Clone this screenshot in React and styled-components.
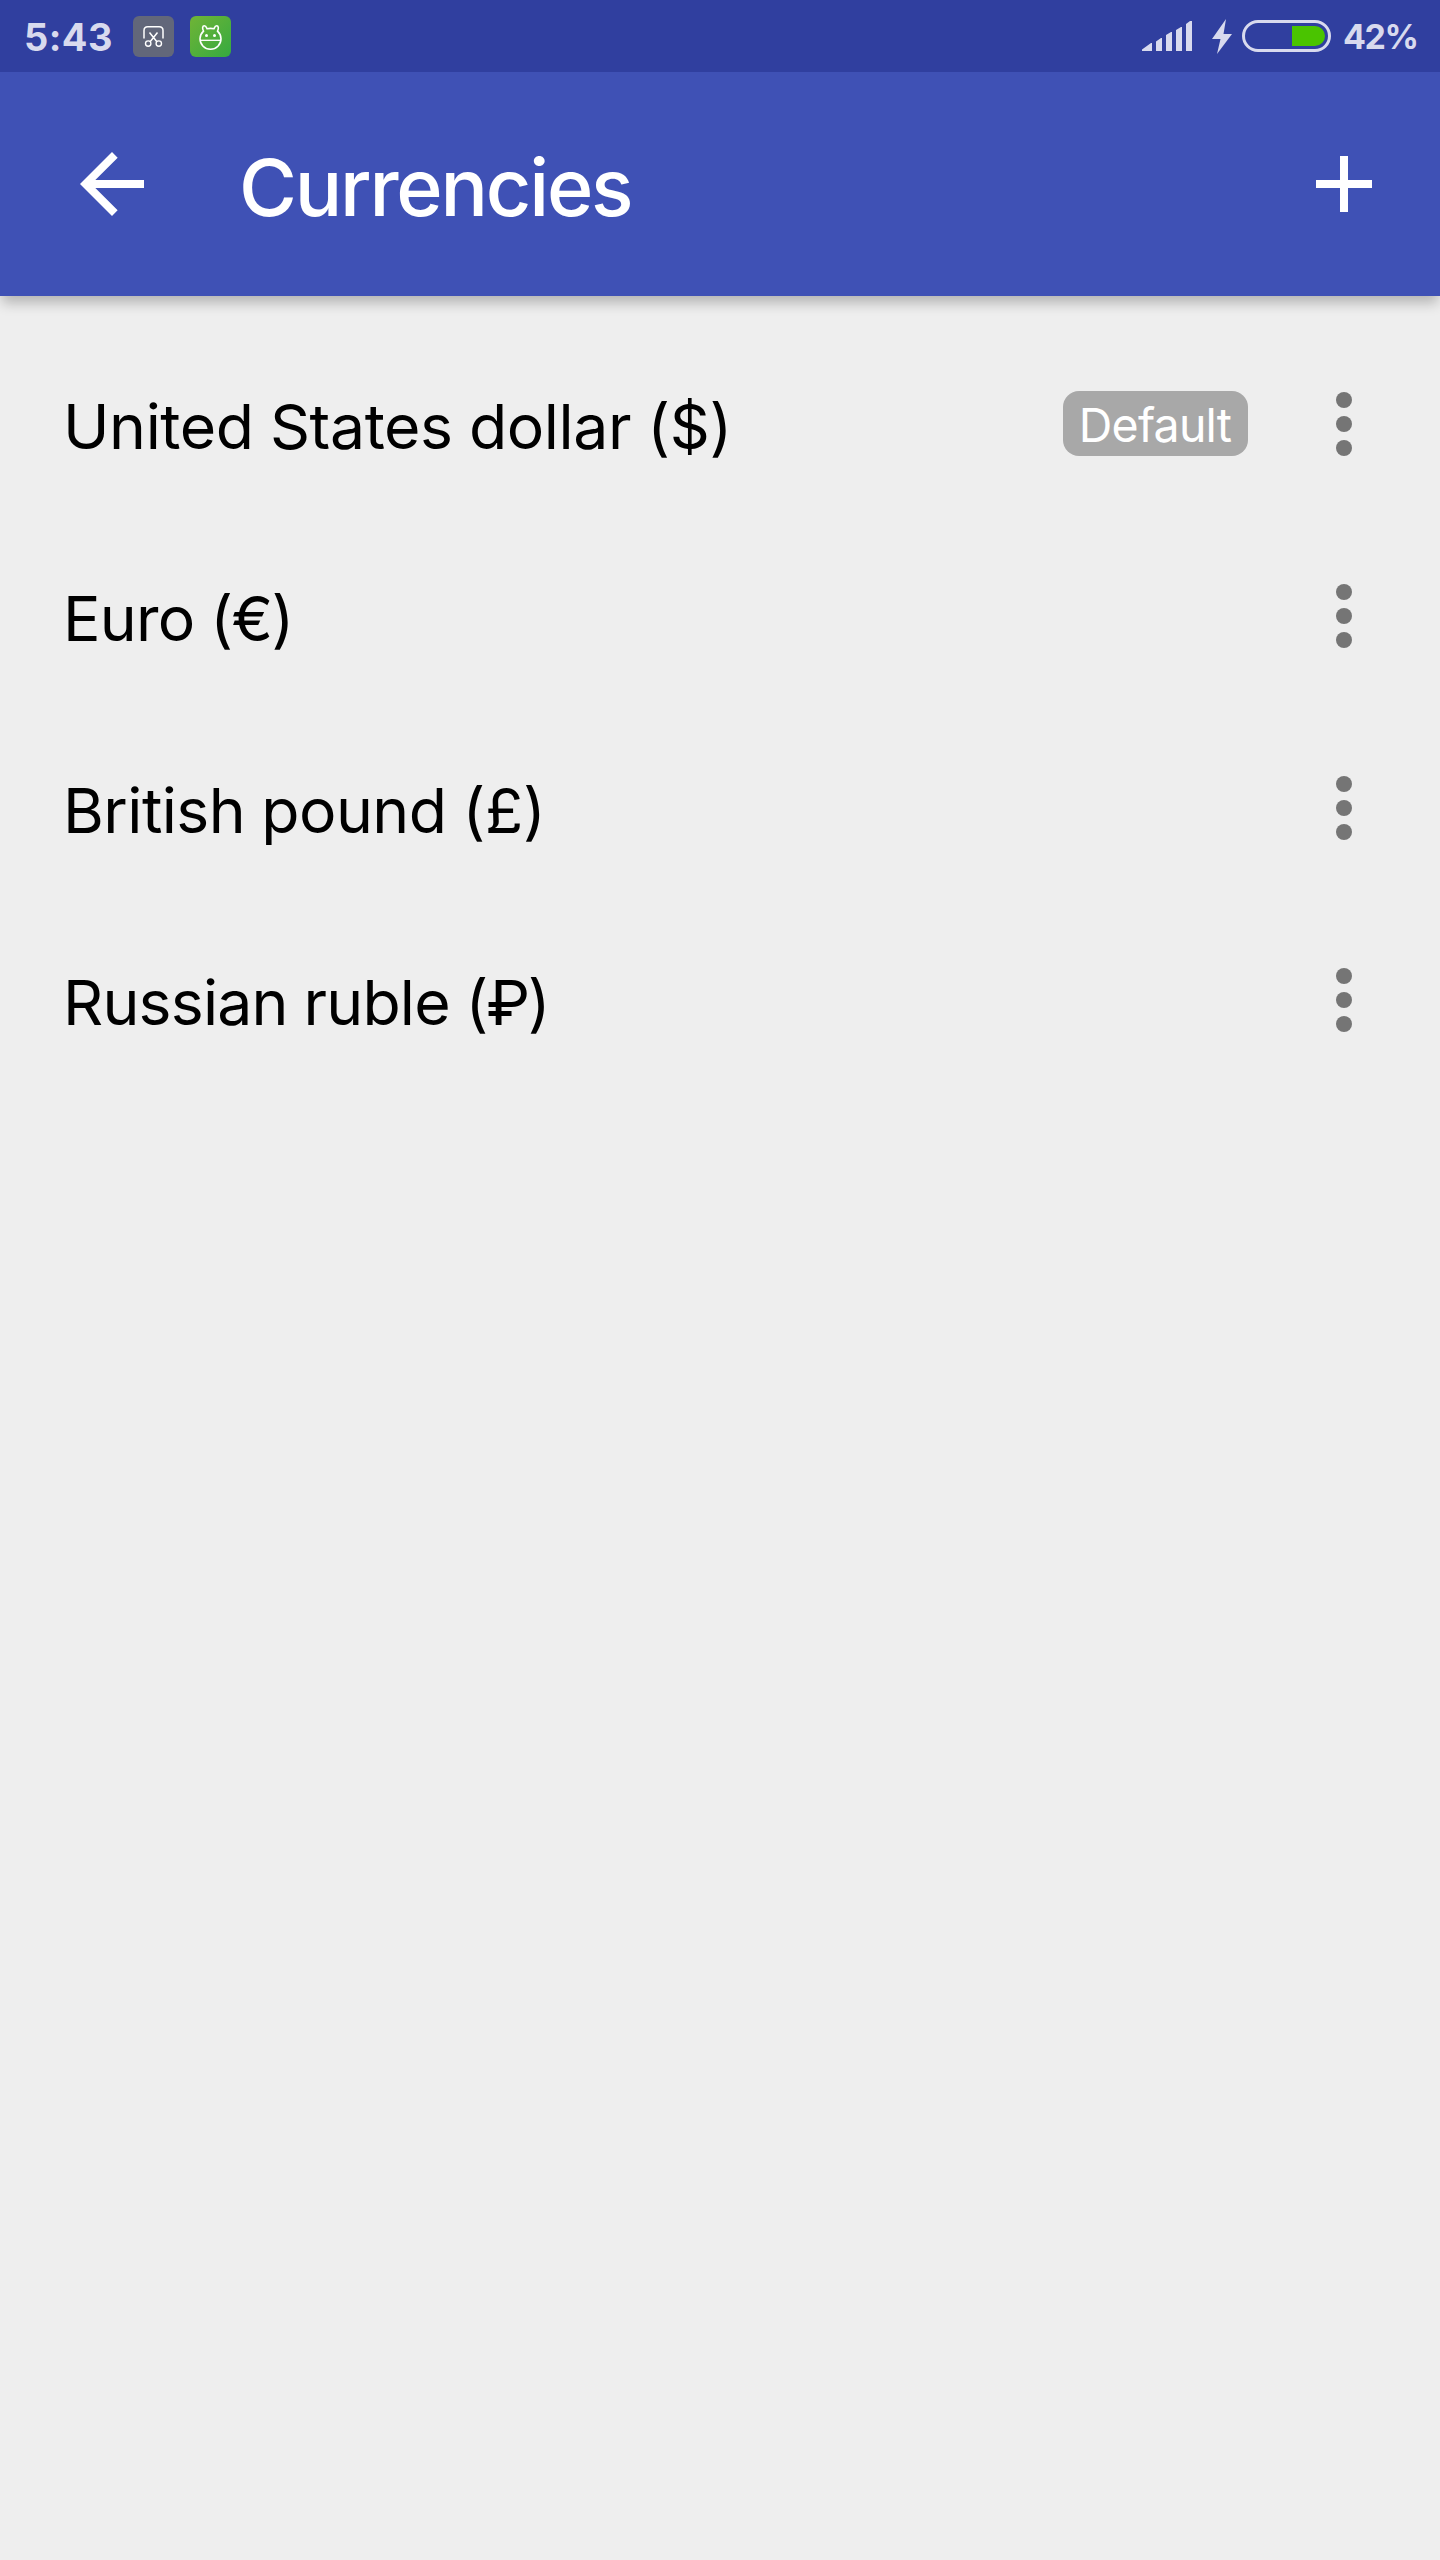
import React from 'react';
import styled, { createGlobalStyle } from 'styled-components';

const GlobalStyle = createGlobalStyle`
* {
  box-sizing: border-box;
}
body {
  margin: 0;
  background: #eeeeee;
  font-family: Inter, "Liberation Sans", sans-serif;
}
`;

export const Screen = styled.div`
display: flex;
flex-direction: column;
width: 1440px;
height: 2560px;
overflow: hidden;
background: #eeeeee;
color: #000;
`;

export const StatusBar = styled.header`
display: flex;
align-items: center;
flex: none;
height: 72px;
padding: 0 23px 0 24px;
background: #303f9f;
color: #d8daee;
z-index: 2;
`;

export const Clock = styled.span`
width: 109px;
padding-top: 2px;
font-size: 38px;
font-weight: 700;
line-height: 72px;
letter-spacing: 0.4px;
white-space: nowrap;
`;

export const Percent = styled.span`
width: 86px;
padding: 2px 0 0 12px;
font-size: 34px;
font-weight: 700;
line-height: 72px;
letter-spacing: -1.5px;
white-space: nowrap;
`;

export const StatusIcon = styled.svg`
flex: none;
display: block;
margin-left: ${props => props.$gap || '0'};
`;

export const Spacer = styled.div`
flex: 1;
`;

export const AppBar = styled.nav`
display: flex;
align-items: center;
flex: none;
height: 224px;
padding: 0 48px 0 64px;
background: #3f51b5;
color: #fff;
box-shadow: 0 9px 12px -2px rgba(0, 0, 0, 0.24);
z-index: 1;
`;

export const BarIcon = styled.svg`
flex: none;
display: block;
fill: #fff;
`;

export const Title = styled.h1`
flex: 1;
margin: 0;
padding: 6px 0 0 79px;
font-size: 79px;
font-weight: 500;
line-height: 96px;
letter-spacing: -2.2px;
`;

export const List = styled.ul`
margin: 0;
padding: 32px 0 0;
list-style: none;
`;

export const Row = styled.li`
display: flex;
align-items: center;
height: 192px;
padding: 0 48px 0 63px;
`;

export const Name = styled.span`
flex: 1;
padding-top: 4px;
font-size: 62.5px;
line-height: 80px;
letter-spacing: ${props => props.$spacing};
word-spacing: -1px;
white-space: nowrap;
`;

export const Sign = styled.span`
letter-spacing: ${props => props.$spacing};
`;

export const Badge = styled.span`
display: flex;
align-items: center;
justify-content: center;
width: 185px;
height: 65px;
margin: 0 48px 1px 0;
padding: 2px 1px 0 0;
border-radius: 16px;
background: #a8a8a8;
color: #fff;
font-size: 46.5px;
letter-spacing: -0.8px;
`;

const currencies = [
  { name: 'United States dollar', sign: '$', isDefault: true, nameSpacing: '-0.4px', signSpacing: '-0.4px' },
  { name: 'Euro', sign: '€', nameSpacing: '-0.75px', signSpacing: '-1.6px' },
  { name: 'British pound', sign: '£', nameSpacing: '-0.55px', signSpacing: '-0.2px' },
  { name: 'Russian ruble', sign: '₽', nameSpacing: '-0.8px', signSpacing: '-2.2px' },
];

const ScissorsIcon = () =>
    <StatusIcon width="41" height="41" viewBox="0 0 41 41" fill="none" stroke="#fff">
        <rect width="41" height="41" rx="6" fill="#62677a" stroke="none" />
        <path d="M11 22.5V14.5Q11 10.700 14.800 10.700H26.200Q30 10.700 30 14.500V22.500" strokeWidth="1.500" />
        <path d="M16.500 16.500L23.700 25.500M24.500 16.500L17.300 25.500" strokeWidth="1.500" />
        <circle cx="15.200" cy="27.600" r="2.700" strokeWidth="1.400" />
        <circle cx="25.800" cy="27.600" r="2.700" strokeWidth="1.400" />
    </StatusIcon>;

const RobotIcon = () =>
    <StatusIcon $gap="16px" width="41" height="41" viewBox="0 0 41 41" fill="none" stroke="#fff">
        <defs>
            <linearGradient id="green" x1="0" y1="0" x2="1" y2="1">
                <stop offset="0" stopColor="#70b436" />
                <stop offset="1" stopColor="#35aa40" />
            </linearGradient>
        </defs>
        <rect width="41" height="41" rx="6" fill="url(#green)" stroke="none" />
        <path d="M13.500 15.200C12 12.500 12.500 9.800 14.300 9.800S16.500 11.500 17 12.700Q20.500 12 24 12.700C24.500 11.500 25 9.800 26.700 9.800S29 12.500 27.500 15.200Q31 18.500 31 22.800A10.500 10.500 0 0 1 10 22.800Q10 18.500 13.500 15.200Z" strokeWidth="1.600" />
        <path d="M10 24.300H31" strokeWidth="1.300" />
        <g fill="#fff" stroke="none">
            <circle cx="16.500" cy="19.400" r="1.500" />
            <circle cx="24.500" cy="19.400" r="1.500" />
        </g>
    </StatusIcon>;

const SignalIcon = () =>
    <StatusIcon width="50" height="30" viewBox="0 0 50 30" fill="#d8daee">
        <path d="M0 30V28.500L9 22H10V30ZM14 30V20.500L19 17H20V30ZM24 30V14L29 11H30V30ZM34 30V9L39 6H40V30ZM44 30V3L48 0H50V30Z" />
    </StatusIcon>;

const BoltIcon = () =>
    <StatusIcon $gap="20px" width="20" height="35" viewBox="0 0 20 35" fill="#d8daee">
        <path d="M14 0L0 20H8.500L5 35L20 15H11.500Z" />
    </StatusIcon>;

const BatteryIcon = () =>
    <StatusIcon $gap="10px" width="89" height="32" viewBox="0 0 89 32">
        <rect x="1.500" y="1.500" width="86" height="29" rx="14.500" fill="none" stroke="#d8daee" strokeWidth="3" />
        <path d="M50 6H73A10 10 0 0 1 73 26H50Z" fill="#4ac400" />
    </StatusIcon>;

const MoreIcon = () =>
    <svg width="96" height="96" viewBox="0 0 24 24" fill="#757575">
        <circle cx="12" cy="6" r="2" />
        <circle cx="12" cy="12" r="2" />
        <circle cx="12" cy="18" r="2" />
    </svg>;

export default function App() {
  return (
    <Screen>
        <GlobalStyle />
        <StatusBar>
            <Clock>5:43</Clock>
            <ScissorsIcon />
            <RobotIcon />
            <Spacer />
            <SignalIcon />
            <BoltIcon />
            <BatteryIcon />
            <Percent>42%</Percent>
        </StatusBar>
        <AppBar>
            <BarIcon width="96" height="96" viewBox="0 0 24 24">
                <path d="M20 11H7.830l5.590-5.590L12 4l-8 8 8 8 1.410-1.410L7.830 13H20v-2z" />
            </BarIcon>
            <Title>Currencies</Title>
            <BarIcon width="96" height="96" viewBox="0 0 24 24">
                <path d="M19 13h-6v6h-2v-6H5v-2h6V5h2v6h6v2z" />
            </BarIcon>
        </AppBar>
        <List>
            {currencies.map(c =>
                <Row key={c.name}>
                    <Name $spacing={c.nameSpacing}>
                        {c.name} <Sign $spacing={c.signSpacing}>({c.sign})</Sign>
                    </Name>
                    {c.isDefault && <Badge>Default</Badge>}
                    <MoreIcon />
                </Row>
            )}
        </List>
    </Screen>
  );
}
